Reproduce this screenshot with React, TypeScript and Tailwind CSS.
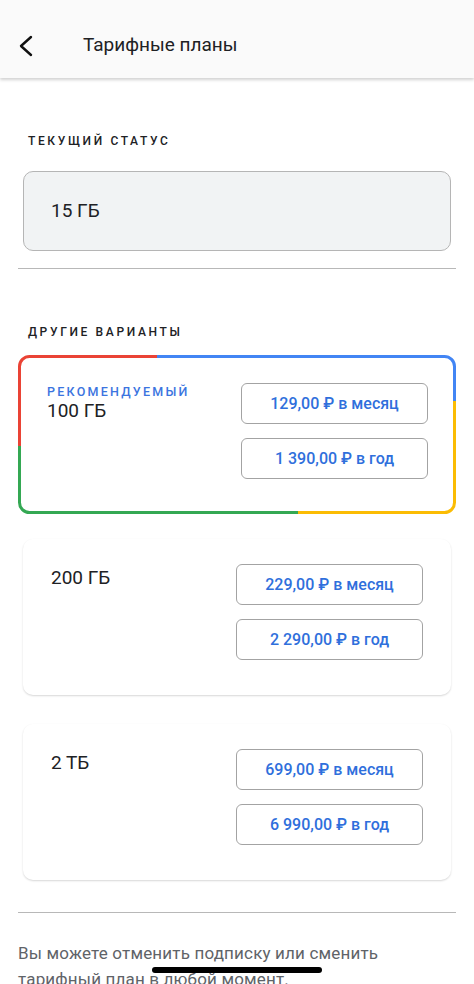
import React from 'react';

interface Plan {
  id: string;
  size: string;
  monthly: string;
  yearly: string;
}

const plans: Plan[] = [
  { id: '200', size: '200 ГБ', monthly: '229,00 ₽ в месяц', yearly: '2 290,00 ₽ в год' },
  { id: '2tb', size: '2 ТБ', monthly: '699,00 ₽ в месяц', yearly: '6 990,00 ₽ в год' },
];

const font = { fontFamily: 'Roboto, "Noto Sans", sans-serif' };

const PriceButtons: React.FC<{ monthly: string; yearly: string }> = ({ monthly, yearly }) => (
  <div className="flex flex-col gap-[14px]">
    {[monthly, yearly].map((label) => (
      <button
        key={label}
        className="w-[187px] h-[41px] rounded-[6px] border border-[#a3a3a3] bg-white text-[16px] font-medium text-[#2f6fdc] flex items-center justify-center"
      >
        {label}
      </button>
    ))}
  </div>
);

// Google-coloured outline around the recommended plan
const GoogleBorder: React.FC = () => (
  <svg
    className="absolute inset-0 pointer-events-none"
    width="438"
    height="159"
    viewBox="0 0 438 159"
    fill="none"
    strokeWidth="3"
  >
    <path d="M1.5 91V11.5A10 10 0 0 1 11.5 1.5H139" stroke="#ea4335" />
    <path d="M139 1.5H426.5A10 10 0 0 1 436.5 11.5V46" stroke="#4285f4" />
    <path d="M436.5 46V147.5A10 10 0 0 1 426.5 157.5H280" stroke="#fbbc04" />
    <path d="M280 157.5H11.5A10 10 0 0 1 1.5 147.5V91" stroke="#34a853" />
  </svg>
);

export default function App() {
  return (
    <div className="relative min-h-screen bg-white text-[#202124]" style={font}>
      {/* Header */}
      <header className="h-[78px] bg-[#fafafa] shadow-[0_2px_3px_rgba(0,0,0,0.18)] flex items-center pt-[13px]">
        <button className="ml-[16px] w-[20px] h-[24px] flex items-center justify-center">
          <svg width="16" height="22" viewBox="0 0 16 22" fill="none" stroke="#111" strokeWidth="2.4" strokeLinecap="round" strokeLinejoin="round">
            <path d="M13 2L3 11L13 20" />
          </svg>
        </button>
        <h1 className="ml-[47px] text-[19px] text-[#202124]">Тарифные планы</h1>
      </header>

      <main className="px-[18px]">
        <p className="mt-[54px] ml-[10px] text-[12px] font-medium tracking-[0.22em] text-[#202124]">ТЕКУЩИЙ СТАТУС</p>

        <div className="mt-[21px] mx-[5px] h-[80px] rounded-[10px] border border-[#b5b5b5] bg-[#f1f3f4] flex items-center pl-[27px]">
          <span className="text-[19px]">15 ГБ</span>
        </div>

        <div className="mt-[17px] h-px bg-[#b8b8b8]" />

        <p className="mt-[54px] ml-[10px] text-[12px] font-medium tracking-[0.22em] text-[#202124]">ДРУГИЕ ВАРИАНТЫ</p>

        {/* Recommended plan */}
        <div className="relative mt-[14px] w-[438px] h-[159px] rounded-[10px] flex justify-between pt-[28px] pl-[29px] pr-[28px]">
          <GoogleBorder />
          <div className="pt-[1px]">
            <p className="text-[12.5px] font-medium tracking-[0.18em] text-[#3b74e0] leading-[16px]">РЕКОМЕНДУЕМЫЙ</p>
            <p className="text-[19px] leading-[22px]">100 ГБ</p>
          </div>
          <PriceButtons monthly="129,00 ₽ в месяц" yearly="1 390,00 ₽ в год" />
        </div>

        {/* Other plans */}
        <div className="mx-[5px]">
          {plans.map((plan, i) => (
            <div
              key={plan.id}
              className={`${i === 0 ? 'mt-[25px]' : 'mt-[29px]'} h-[156px] rounded-[10px] bg-white shadow-[0_1px_2px_rgba(0,0,0,0.16)] flex justify-between pt-[25px] pl-[28px] pr-[28px]`}
            >
              <p className="mt-[3px] text-[19px] leading-[22px]">{plan.size}</p>
              <PriceButtons monthly={plan.monthly} yearly={plan.yearly} />
            </div>
          ))}
        </div>

        <div className="mt-[32px] h-px bg-[#b8b8b8]" />

        <p className="mt-[27px] text-[17px] leading-[26px] text-[#5f6368] tracking-[0.01em]">
          Вы можете отменить подписку или сменить тарифный план в любой момент.
        </p>
      </main>

      {/* iOS home indicator */}
      <div className="fixed bottom-[11px] left-1/2 -translate-x-1/2 w-[170px] h-[6px] rounded-full bg-black" />
    </div>
  );
}
